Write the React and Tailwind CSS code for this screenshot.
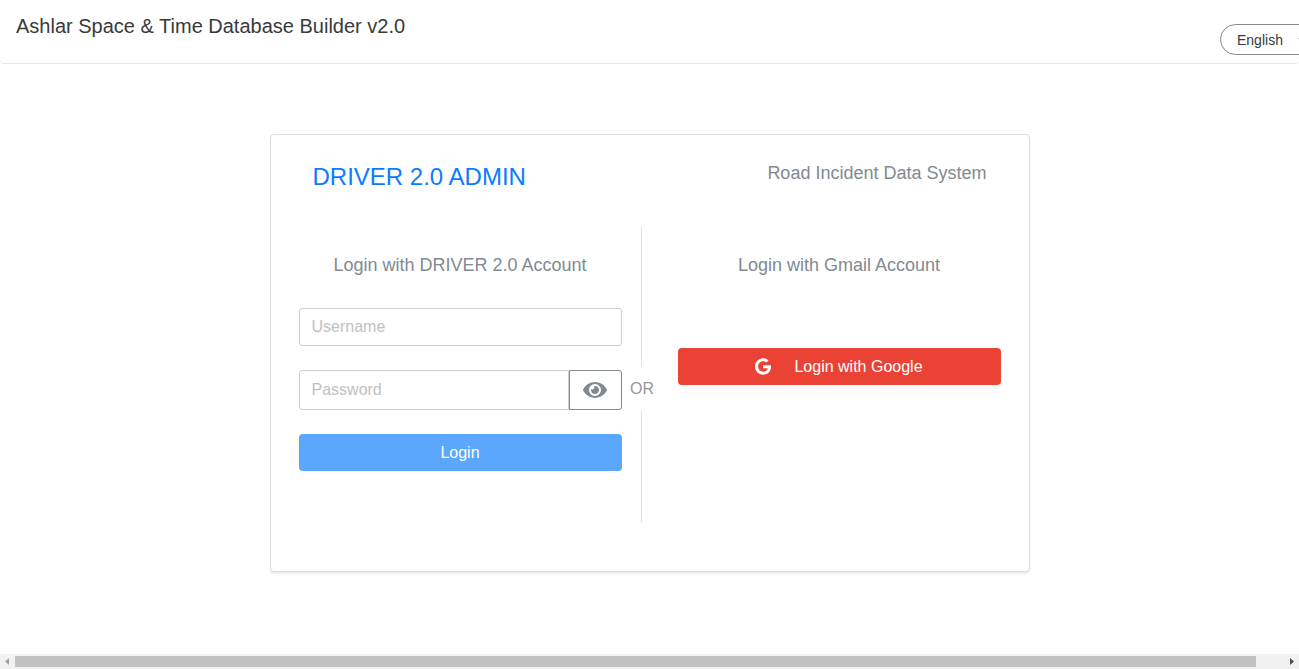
import { FaEye, FaGoogle } from 'react-icons/fa';

function LanguageSelect() {
  return (
    <div className="relative mt-6 -mr-8 w-[95px] shrink-0 self-start">
      <select
        aria-label="Language"
        defaultValue="en"
        className="block h-[31px] w-full appearance-none rounded-full border border-[#818a91] bg-white pl-4 text-sm text-[#373a3c]"
      >
        <option value="en">English</option>
      </select>
      <svg
        viewBox="0 0 8 4"
        className="pointer-events-none absolute top-[14px] right-[9px] h-1 w-2 fill-[#818a91]"
        aria-hidden="true"
      >
        <path d="M0 0h8L4 4z" />
      </svg>
    </div>
  );
}

function Header() {
  return (
    <header className="flex h-16 justify-between overflow-hidden rounded border-b border-[#e7e7e7] bg-white px-4">
      <h1 className="pt-3 text-xl text-[#373a3c]">Ashlar Space &amp; Time Database Builder v2.0</h1>
      <LanguageSelect />
    </header>
  );
}

function AccountLogin() {
  return (
    <form className="min-w-0 flex-1 pt-6" onSubmit={(e) => e.preventDefault()}>
      <h3 className="text-center text-lg text-[#818a91]">Login with DRIVER 2.0 Account</h3>
      <div className="mt-[29px] flex flex-col gap-6">
        <input
          type="text"
          aria-label="Username"
          placeholder="Username"
          className="h-[38px] w-full rounded-[3px] border border-[#cecece] bg-white px-3 placeholder:text-[#bfbfbf]"
        />
        <div className="flex h-10">
          <input
            type="password"
            aria-label="Password"
            placeholder="Password"
            className="min-w-0 flex-1 rounded-l-[3px] border border-[#cecece] bg-white px-3 placeholder:text-[#bfbfbf]"
          />
          <button
            type="button"
            aria-label="Show password"
            className="flex w-[53px] items-center justify-center rounded-r-[3px] border border-[#818a91] text-[#818a91]"
          >
            <FaEye className="h-6 w-6" />
          </button>
        </div>
        <button type="submit" className="h-[37px] rounded bg-[#5aa7fd] text-white">
          Login
        </button>
      </div>
    </form>
  );
}

function Divider() {
  return (
    <div className="mr-4 flex w-10 flex-col items-center">
      <div className="h-[140px] w-px bg-[#e2e2e2]" />
      <span className="py-[10px] pl-px text-[#979797]">OR</span>
      <div className="w-px flex-1 bg-[#e2e2e2]" />
    </div>
  );
}

function GoogleLogin() {
  return (
    <section className="min-w-0 flex-1 pt-6">
      <h3 className="text-center text-lg text-[#818a91]">Login with Gmail Account</h3>
      <button
        type="button"
        className="mt-[69px] flex h-[37px] w-full items-center justify-center gap-[23px] rounded bg-[#ea4335] text-white"
      >
        <FaGoogle className="h-[17px] w-4" />
        Login with Google
      </button>
    </section>
  );
}

function ScrollBar() {
  return (
    <div className="flex h-[15px] items-center bg-[#f1f1f1]" aria-hidden="true">
      <svg viewBox="0 0 15 15" className="h-[15px] w-[15px] shrink-0 fill-[#a3a3a3]">
        <path d="M5 7.5 9 4v7z" />
      </svg>
      <div className="flex flex-1">
        <div className="h-[11px] w-[97.8%] bg-[#c1c1c1]" />
      </div>
      <svg viewBox="0 0 15 15" className="h-[15px] w-[15px] shrink-0 fill-[#505050]">
        <path d="M10 7.5 6 4v7z" />
      </svg>
    </div>
  );
}

export default function App() {
  return (
    <div className="flex min-h-screen flex-col bg-white font-['Liberation_Sans',Arial,sans-serif] text-base">
      <Header />
      <main className="flex-1 px-4 pt-[70px] pb-16">
        <div className="mx-auto max-w-[760px] rounded border border-[#dcdcdc] bg-white px-7 pt-6 pb-12 shadow-[0_2px_2px_rgba(0,0,0,0.08)]">
          <div className="flex items-start justify-between px-[14px]">
            <h2 className="text-2xl leading-9 text-[#0b7bff]">DRIVER 2.0 ADMIN</h2>
            <p className="text-lg text-[#818a91]">Road Incident Data System</p>
          </div>
          <div className="mt-8 flex min-h-[296px]">
            <AccountLogin />
            <Divider />
            <GoogleLogin />
          </div>
        </div>
      </main>
      <ScrollBar />
    </div>
  );
}
